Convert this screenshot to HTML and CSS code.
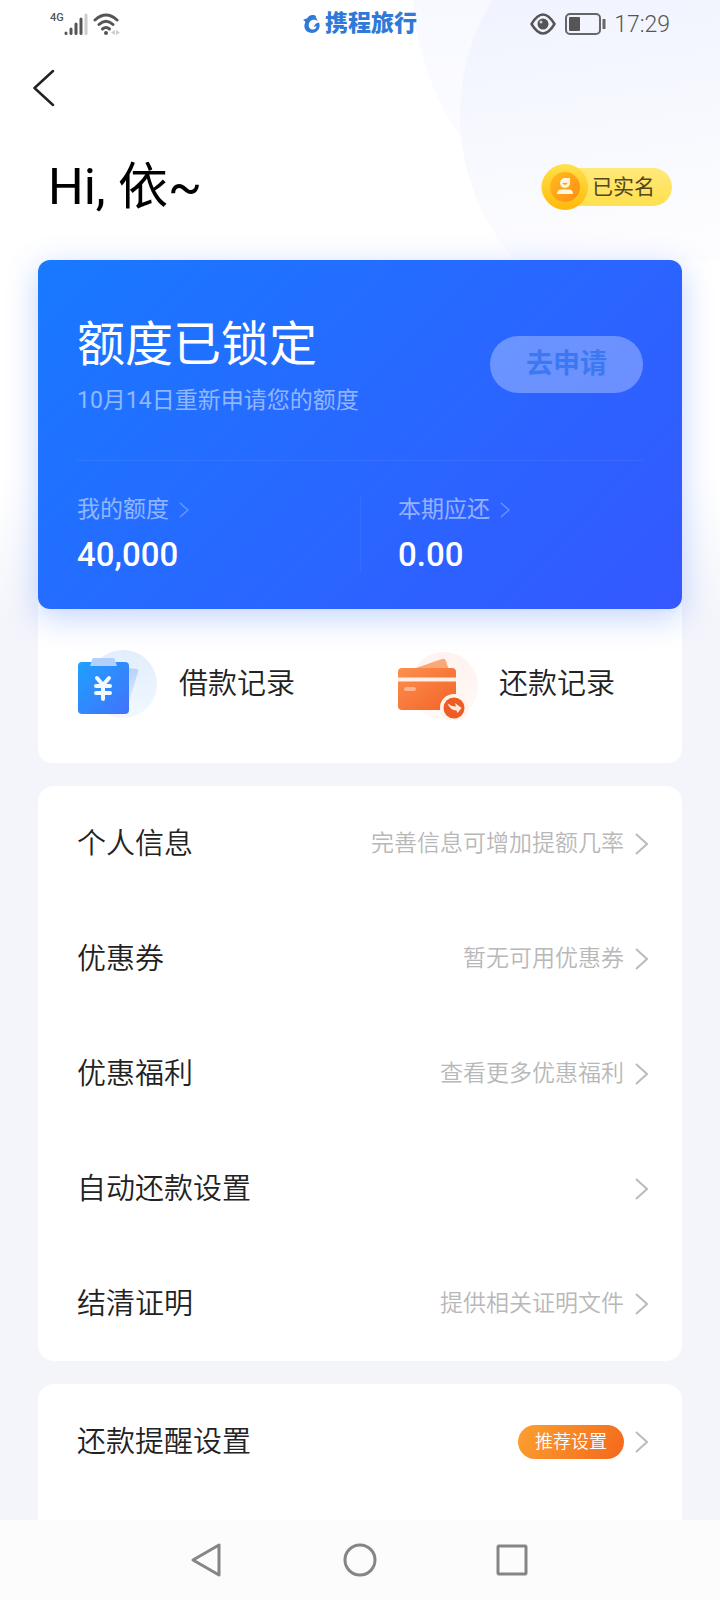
FILE: index.html
```
<!DOCTYPE html>
<html lang="zh-CN">
<head>
    <meta charset="UTF-8">
    <meta name="viewport" content="width=device-width, initial-scale=1.0">
    <title>我的额度</title>
    <link rel="stylesheet" href="styles.css">
</head>
<body>
    <div class="app">
        <svg class="backdrop" width="310" height="260" viewBox="0 0 310 260" aria-hidden="true">
            <defs>
                <linearGradient id="bgOuter" x1="0" y1="0" x2="0" y2="260" gradientUnits="userSpaceOnUse">
                    <stop offset="0" stop-color="#f8f9ff"/>
                    <stop offset="1" stop-color="#ffffff"/>
                </linearGradient>
                <linearGradient id="bgInner" x1="150" y1="0" x2="190" y2="260" gradientUnits="userSpaceOnUse">
                    <stop offset="0" stop-color="#f1f4fe"/>
                    <stop offset="1" stop-color="#fdfdff"/>
                </linearGradient>
            </defs>
            <circle cx="282" cy="-20" r="280" fill="url(#bgOuter)"/>
            <circle cx="270" cy="115" r="220" fill="url(#bgInner)"/>
        </svg>

        <div class="status-bar">
            <div class="status-left">
                <span class="network">4G</span>
                <svg width="24" height="24" viewBox="0 0 24 24" aria-hidden="true">
                    <g stroke="#555" stroke-width="3" stroke-linecap="round">
                        <path d="M2 21v.5M7 17v4.500M12 12v9.500M17 7v14.500"/>
                        <path d="M22 3v18.500" stroke="#ccc"/>
                    </g>
                </svg>
                <svg class="wifi" width="28" height="24" viewBox="0 0 28 24" aria-hidden="true">
                    <g fill="none" stroke="#555" stroke-width="3" stroke-linecap="round">
                        <path d="M2 8Q13 -2 24 8"/>
                        <path d="M6 12.500Q13 6 20 12.500"/>
                        <path d="M9.500 17Q13 14 16.500 17"/>
                    </g>
                    <circle cx="13" cy="21" r="2" fill="#555"/>
                    <path d="M22 18v5l-4-2.500zM23 18v5l4-2.500z" fill="#ccc"/>
                </svg>
            </div>
            <div class="brand">
                <svg width="18" height="18" viewBox="0 0 18 18" aria-hidden="true">
                    <path d="M0 5C2 4 3 3.500 4 3.500C6 0 10 -1 13 1C12.500 2 13 3 15 6C12 4 9 4.500 7.500 6C4.500 9 5.500 14 9 14.500C12 15 13.500 13 13.500 11L11 12C11.500 9.500 13 8 16 7.500C18 12 15 17.500 9 18C3 18 0 13 2 8C2.500 6.500 2 6 0 5Z" fill="#2f7ad8"/>
                </svg>
                <span>携程旅行</span>
            </div>
            <div class="status-right">
                <svg width="26" height="22" viewBox="0 0 26 22" aria-hidden="true">
                    <path d="M1.500 11Q13 -8 24.500 11Q13 30 1.500 11Z" fill="none" stroke="#555" stroke-width="2.500" stroke-linejoin="round"/>
                    <circle cx="13" cy="11" r="5.500" fill="#555"/>
                    <circle cx="11" cy="9" r="1.500" fill="#ccc"/>
                </svg>
                <svg class="battery" width="41" height="22" viewBox="0 0 41 22" aria-hidden="true">
                    <rect x="1" y="1" width="34" height="20" rx="4" fill="none" stroke="#666" stroke-width="2"/>
                    <rect x="4" y="4" width="11" height="14" rx="1" fill="#555"/>
                    <path d="M39 6v10" stroke="#666" stroke-width="3"/>
                </svg>
                <time class="clock">17:29</time>
            </div>
        </div>

        <header class="top-bar">
            <button type="button" class="back" aria-label="返回">
                <svg width="22" height="40" viewBox="0 0 22 40" aria-hidden="true">
                    <path d="M20 3L1.500 20L20 37" fill="none" stroke="#222" stroke-width="2.500" stroke-linecap="round" stroke-linejoin="round"/>
                </svg>
            </button>
        </header>

        <main class="content">
            <div class="greeting">
                <h1>Hi, 依~</h1>
                <div class="verified">
                    <svg class="coin" width="48" height="48" viewBox="0 0 48 48" aria-hidden="true">
                        <defs>
                            <linearGradient id="coinOuter" x1="0" y1="0" x2="0" y2="1">
                                <stop offset="0" stop-color="#ffe24a"/>
                                <stop offset="1" stop-color="#ffb80c"/>
                            </linearGradient>
                            <linearGradient id="coinInner" x1="0" y1="0" x2="1" y2="1">
                                <stop offset="0" stop-color="#ffbe1e"/>
                                <stop offset="1" stop-color="#ff8a12"/>
                            </linearGradient>
                        </defs>
                        <circle cx="24" cy="24" r="23" fill="url(#coinOuter)"/>
                        <circle cx="24" cy="24" r="15" fill="url(#coinInner)"/>
                        <path d="M24 15H29V20A5 5 0 1 1 24 15Z" fill="#fff6e0"/>
                        <path d="M22 20Q24 22 26 20" fill="none" stroke="#ff9a18" stroke-width="1.500"/>
                        <path d="M16 31Q16 26.500 20 26.500H28Q32 26.500 32 31Z" fill="#fff6e0"/>
                    </svg>
                    <span>已实名</span>
                </div>
            </div>

            <section class="quota">
                <div class="quota-top">
                    <div>
                        <h2>额度已锁定</h2>
                        <p>10月14日重新申请您的额度</p>
                    </div>
                    <button type="button" class="apply" disabled>去申请</button>
                </div>
                <div class="stats">
                    <a class="stat" href="#quota">
                        <span class="stat-label">我的额度
                            <svg width="10" height="18" viewBox="0 0 10 18" aria-hidden="true"><path d="M1 2L9 9L1 16"/></svg>
                        </span>
                        <strong>40,000</strong>
                    </a>
                    <a class="stat" href="#bill">
                        <span class="stat-label">本期应还
                            <svg width="10" height="18" viewBox="0 0 10 18" aria-hidden="true"><path d="M1 2L9 9L1 16"/></svg>
                        </span>
                        <strong>0.00</strong>
                    </a>
                </div>
            </section>

            <nav class="records">
                <a class="record" href="#loans">
                    <svg width="80" height="72" viewBox="0 0 80 72" aria-hidden="true">
                        <defs>
                            <linearGradient id="board" x1="0" y1="0" x2="1" y2="1">
                                <stop offset="0" stop-color="#1fa0ff"/>
                                <stop offset="1" stop-color="#4272fb"/>
                            </linearGradient>
                            <linearGradient id="halo" x1="0" y1="0" x2="0" y2="1">
                                <stop offset="0" stop-color="#e2eefd"/>
                                <stop offset="1" stop-color="#f1f8ff"/>
                            </linearGradient>
                            <linearGradient id="sheet" x1="0" y1="0" x2="0" y2="1">
                                <stop offset="0" stop-color="#b5d0fb"/>
                                <stop offset="1" stop-color="#e0eefe"/>
                            </linearGradient>
                        </defs>
                        <circle cx="45" cy="36" r="34" fill="url(#halo)"/>
                        <path d="M40 19L59 21Q61 22 60 24L50 57H40Z" fill="url(#sheet)"/>
                        <rect x="0" y="14" width="51" height="52" rx="4" fill="url(#board)"/>
                        <path d="M16 10H35Q37 10 37 12L39 18H12L14 12Q14 10 16 10Z" fill="#b4cffa"/>
                        <path d="M19 30L25 37L31 30M18 38H32M18 45H32M25 37V51" fill="none" stroke="#f2faff" stroke-width="4" stroke-linecap="round" stroke-linejoin="round"/>
                    </svg>
                    <span>借款记录</span>
                </a>
                <a class="record" href="#repayments">
                    <svg width="80" height="72" viewBox="0 0 80 72" aria-hidden="true">
                        <defs>
                            <linearGradient id="wallet" x1="0" y1="0" x2="1" y2="1">
                                <stop offset="0" stop-color="#fd8f4e"/>
                                <stop offset="1" stop-color="#f26328"/>
                            </linearGradient>
                            <linearGradient id="warmHalo" x1="0" y1="0" x2="0" y2="1">
                                <stop offset="0" stop-color="#fef3f0"/>
                                <stop offset="1" stop-color="#fff9f5"/>
                            </linearGradient>
                        </defs>
                        <circle cx="46" cy="38" r="34" fill="url(#warmHalo)"/>
                        <path d="M18 20L44 11Q47 10 48 13L51 22H18Z" fill="#fba878"/>
                        <rect x="0" y="20" width="58" height="42" rx="4" fill="url(#wallet)"/>
                        <path d="M0 31.500H58" stroke="#fff0e6" stroke-width="4"/>
                        <path d="M8 41H16" stroke="#fdb48a" stroke-width="4" stroke-linecap="round"/>
                        <circle cx="56" cy="60" r="14" fill="#fff3ec"/>
                        <circle cx="56" cy="60" r="10.500" fill="#ee5c26"/>
                        <path d="M49.500 55.500L54 58L58 58.500L57 55L63.500 60L59.500 65L58.500 62.500Q52 62 49.500 55.500Z" fill="#ffe9df"/>
                    </svg>
                    <span>还款记录</span>
                </a>
            </nav>

            <ul class="menu">
                <li><a class="row" href="#profile"><span class="row-title">个人信息</span><span class="row-note">完善信息可增加提额几率</span><svg class="chevron" width="13" height="22" viewBox="0 0 13 22" aria-hidden="true"><path d="M1 1L12 11L1 21"/></svg></a></li>
                <li><a class="row" href="#coupons"><span class="row-title">优惠券</span><span class="row-note">暂无可用优惠券</span><svg class="chevron" width="13" height="22" viewBox="0 0 13 22" aria-hidden="true"><path d="M1 1L12 11L1 21"/></svg></a></li>
                <li><a class="row" href="#benefits"><span class="row-title">优惠福利</span><span class="row-note">查看更多优惠福利</span><svg class="chevron" width="13" height="22" viewBox="0 0 13 22" aria-hidden="true"><path d="M1 1L12 11L1 21"/></svg></a></li>
                <li><a class="row" href="#autopay"><span class="row-title">自动还款设置</span><svg class="chevron" width="13" height="22" viewBox="0 0 13 22" aria-hidden="true"><path d="M1 1L12 11L1 21"/></svg></a></li>
                <li><a class="row" href="#certificate"><span class="row-title">结清证明</span><span class="row-note">提供相关证明文件</span><svg class="chevron" width="13" height="22" viewBox="0 0 13 22" aria-hidden="true"><path d="M1 1L12 11L1 21"/></svg></a></li>
            </ul>

            <ul class="menu menu-last">
                <li><a class="row" href="#reminder"><span class="row-title">还款提醒设置</span><span class="tag">推荐设置</span><svg class="chevron" width="13" height="22" viewBox="0 0 13 22" aria-hidden="true"><path d="M1 1L12 11L1 21"/></svg></a></li>
            </ul>
        </main>

        <footer class="system-nav">
            <button type="button" aria-label="后退">
                <svg width="36" height="36" viewBox="0 0 36 36" aria-hidden="true"><path d="M29 3V33L3 18Z"/></svg>
            </button>
            <button type="button" aria-label="主屏幕">
                <svg width="36" height="36" viewBox="0 0 36 36" aria-hidden="true"><circle cx="18" cy="18" r="15"/></svg>
            </button>
            <button type="button" aria-label="最近任务">
                <svg width="36" height="36" viewBox="0 0 36 36" aria-hidden="true"><rect x="4" y="4" width="28" height="28" rx="1"/></svg>
            </button>
        </footer>
    </div>
</body>
</html>
```
FILE: styles.css
```
* {
    box-sizing: border-box;
}
body {
    margin: 0;
    font-family: Roboto, "Noto Sans CJK SC", sans-serif;
    color: #222;
}
h1, h2, p, ul {
    margin: 0;
    padding: 0;
    font-weight: 400;
}
ul {
    list-style: none;
}
a {
    color: inherit;
    text-decoration: none;
}
button {
    padding: 0;
    border: none;
    background: none;
    font-family: inherit;
}
svg {
    display: block;
    flex: none;
}
.app {
    position: relative;
    display: flex;
    flex-direction: column;
    min-height: 100vh;
    background: linear-gradient(#fff 480px, #f4f5fb 620px);
}
.backdrop {
    position: absolute;
    top: 0;
    right: 0;
}

/* status bar */
.status-bar {
    position: relative;
    display: grid;
    grid-template-columns: 1fr auto 1fr;
    align-items: center;
    height: 48px;
    padding: 0 50px;
}
.status-left, .status-right, .brand {
    display: flex;
    align-items: center;
}
.status-right {
    justify-content: flex-end;
}
.network {
    align-self: flex-start;
    font-size: 11px;
    line-height: 12px;
    font-weight: 500;
    color: #555;
}
.wifi {
    margin-left: 5px;
}
.brand {
    gap: 4px;
    font-size: 23px;
    line-height: 24px;
    font-weight: 900;
    color: #2f7ad8;
}
.battery {
    margin: 0 8px 0 9px;
}
.clock {
    font-size: 23px;
    font-weight: 300;
    color: #555;
}

.top-bar {
    position: relative;
    display: flex;
    align-items: center;
    height: 80px;
    padding: 0 33px;
}
.back {
    cursor: pointer;
}

.content {
    position: relative;
    flex: 1;
    display: flex;
    flex-direction: column;
    padding: 0 38px;
}
.greeting {
    display: flex;
    align-items: center;
    justify-content: space-between;
    padding: 29px 10px 43px;
}
.greeting h1 {
    font-size: 50px;
    line-height: 60px;
    color: #000;
}
.verified {
    display: flex;
    align-items: center;
    height: 38px;
    padding-right: 17px;
    border-radius: 19px;
    background: linear-gradient(#ffe97a, #ffe04e);
    font-size: 21px;
    line-height: 28px;
    color: #51461f;
}
.coin {
    margin-right: 3px;
}

/* quota card */
.quota {
    position: relative;
    z-index: 1;
    padding: 57px 39px 36px;
    border-radius: 12px;
    background: linear-gradient(135deg, #1879ff, #2868ff 50%, #3458ff);
    box-shadow: 0 8px 32px rgba(50, 110, 255, 0.3);
    color: #fff;
}
.quota-top {
    display: flex;
    align-items: center;
    justify-content: space-between;
    padding-bottom: 43px;
    border-bottom: 1px solid rgba(255, 255, 255, 0.06);
}
.quota h2 {
    font-size: 48px;
    line-height: 56px;
}
.quota p {
    margin-top: 12px;
    font-size: 23px;
    line-height: 32px;
    color: rgba(255, 255, 255, 0.5);
}
.apply {
    width: 153px;
    height: 57px;
    margin-bottom: 6px;
    border-radius: 29px;
    background: rgba(255, 255, 255, 0.3);
    font-size: 27px;
    line-height: 36px;
    font-weight: 700;
    color: #3b78f2;
}
.stats, .records {
    display: grid;
    grid-template-columns: 1fr 1fr;
}
.stats {
    padding-top: 35px;
}
.stat + .stat {
    padding-left: 37px;
    border-left: 1px solid rgba(255, 255, 255, 0.06);
}
.stat-label {
    display: flex;
    align-items: center;
    gap: 10px;
    font-size: 23px;
    line-height: 28px;
    color: rgba(255, 255, 255, 0.5);
}
.stat-label path {
    fill: none;
    stroke: rgba(255, 255, 255, 0.3);
    stroke-width: 1.5;
}
.stat strong {
    display: block;
    margin-top: 13px;
    font-size: 33px;
    line-height: 36px;
    font-weight: 500;
}

/* loan and repayment records */
.records {
    margin-top: -12px;
    padding: 51px 40px 43px;
    border-radius: 0 0 14px 14px;
    background: #fff;
}
.record {
    display: flex;
    align-items: center;
    gap: 21px;
    font-size: 29px;
    line-height: 40px;
    font-weight: 350;
}
.record + .record {
    padding-left: 38px;
}

/* settings lists */
.menu {
    margin-top: 23px;
    border-radius: 16px;
    background: #fff;
}
.menu-last {
    flex: 1;
    border-radius: 16px 16px 0 0;
}
.row {
    display: flex;
    align-items: center;
    gap: 11px;
    height: 115px;
    padding: 0 34px 0 39px;
    font-weight: 350;
    line-height: 40px;
}
.row-title {
    flex: 1;
    font-size: 29px;
}
.row-note {
    font-size: 23px;
    color: #b8b8b8;
}
.chevron path {
    fill: none;
    stroke: #bbb;
    stroke-width: 2;
}
.tag {
    padding: 0 17px;
    border-radius: 17px;
    background: linear-gradient(120deg, #fca030, #f4681c);
    font-size: 18px;
    line-height: 34px;
    color: #fff;
}

.system-nav {
    position: relative;
    display: flex;
    align-items: center;
    justify-content: center;
    gap: 116px;
    height: 80px;
    background: #fcfcfc;
}
.system-nav svg {
    fill: none;
    stroke: #858585;
    stroke-width: 3;
    stroke-linejoin: round;
}
```
